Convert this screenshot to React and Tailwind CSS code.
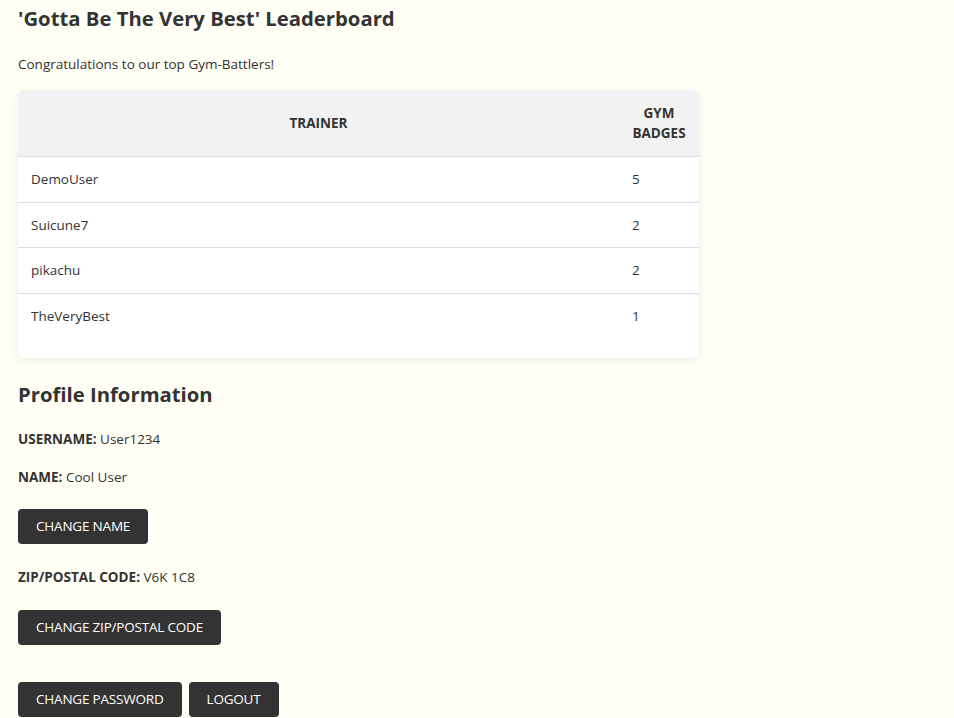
import React from 'react';

const TRAINERS = [
  { name: 'DemoUser', badges: 5 },
  { name: 'Suicune7', badges: 2 },
  { name: 'pikachu', badges: 2 },
  { name: 'TheVeryBest', badges: 1 },
];

const Button = ({ children }) => (
  <button className="h-[35px] px-[18px] bg-[#333333] text-white text-[13.5px] tracking-[-0.2px] rounded-[4px] uppercase">
    {children}
  </button>
);

export default function App() {
  return (
    <div className="min-h-screen bg-[#fffff5] px-[18px] text-[#333333] text-[13.5px] leading-[21px] font-['Open_Sans',sans-serif]">
      {/* Leaderboard */}
      <h2 className="pt-[3px] text-[20.3px] leading-[31px] font-bold">'Gotta Be The Very Best' Leaderboard</h2>
      <p className="mt-[20px]">Congratulations to our top Gym-Battlers!</p>

      <div className="mt-[15px] w-[681px] bg-white rounded-[6px] shadow-[0_2px_8px_rgba(0,0,0,0.08)] overflow-hidden pb-[20px]">
        <table className="w-full border-collapse leading-[20.5px]">
          <thead>
            <tr className="bg-[#f2f2f2] border-b border-[#dddddd]">
              <th className="px-[13px] py-[12.5px] font-bold uppercase text-center">Trainer</th>
              <th className="w-[80px] px-[12px] py-[12.5px] font-bold uppercase text-center">Gym Badges</th>
            </tr>
          </thead>
          <tbody>
            {TRAINERS.map((t, i) => (
              <tr key={t.name} className={i < TRAINERS.length - 1 ? 'border-b border-[#dddddd]' : ''}>
                <td className="px-[13px] py-[12px]">{t.name}</td>
                <td className="px-[13px] py-[12px]">{t.badges}</td>
              </tr>
            ))}
          </tbody>
        </table>
      </div>

      {/* Profile */}
      <h2 className="mt-[21px] text-[20.3px] leading-[31px] font-bold">Profile Information</h2>
      <p className="mt-[19px]"><span className="font-bold">USERNAME:</span> User1234</p>
      <p className="mt-[17px]"><span className="font-bold">NAME:</span> Cool User</p>
      <div className="mt-[21px]">
        <Button>Change Name</Button>
      </div>
      <p className="mt-[23px]"><span className="font-bold">ZIP/POSTAL CODE:</span> V6K 1C8</p>
      <div className="mt-[22px]">
        <Button>Change Zip/Postal Code</Button>
      </div>
      <div className="mt-[37px] flex gap-[7px] pb-[20px]">
        <Button>Change Password</Button>
        <Button>Logout</Button>
      </div>
    </div>
  );
}
